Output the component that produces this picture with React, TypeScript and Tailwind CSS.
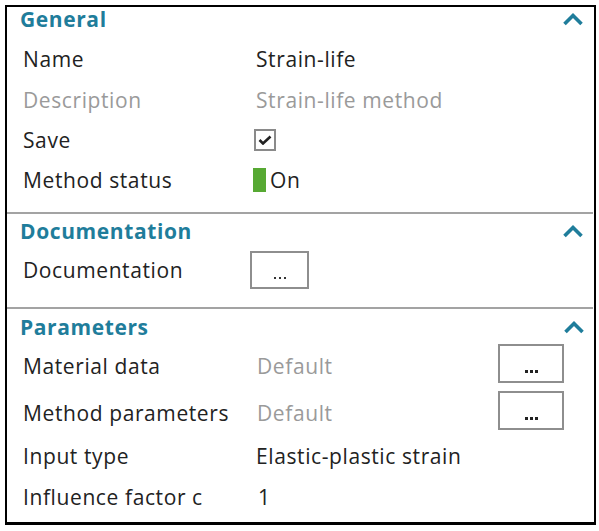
import React from 'react'

const font = { fontFamily: '"Open Sans", "Noto Sans", sans-serif' }

function Chevron() {
  return (
    <svg width="22" height="14" viewBox="0 0 22 14" className="text-[#1f7d9b]">
      <polyline points="2.5,12 11,3.5 19.5,12" fill="none" stroke="currentColor" strokeWidth="3.6" strokeLinecap="butt" strokeLinejoin="miter" />
    </svg>
  )
}

function Header({ title, pt }: { title: string; pt: string }) {
  return (
    <div className={`flex items-center justify-between h-[24px] pl-[13px] pr-[9px] ${pt}`}>
      <span className="text-[21px] leading-[24px] font-bold text-[#1f7d9b]">{title}</span>
      <Chevron />
    </div>
  )
}

function Row({ label, value, h, muted }: { label: string; value: React.ReactNode; h: string; muted?: boolean }) {
  return (
    <div className={`flex items-center pl-[16px] ${h}`}>
      <span className={`w-[233px] shrink-0 ${muted ? 'text-[#9a9a9a]' : 'text-[#222]'}`}>{label}</span>
      <div className={`flex-1 flex items-center ${muted ? 'text-[#9a9a9a]' : 'text-[#222]'}`}>{value}</div>
    </div>
  )
}

function DotsButton({ bold, className }: { bold?: boolean; className: string }) {
  return (
    <button
      type="button"
      className={`flex items-end justify-center border-2 border-[#8e8e8e] bg-white pb-[4px] text-[#222] ${className}`}
    >
      {bold ? (
        <span className="flex gap-[2px] mb-[4px]">
          <span className="w-[3px] h-[3px] bg-[#222]" />
          <span className="w-[3px] h-[3px] bg-[#222]" />
          <span className="w-[3px] h-[3px] bg-[#222]" />
        </span>
      ) : (
        <span className="flex gap-[3px] mb-[4px]">
          <span className="w-[2px] h-[2px] bg-[#333]" />
          <span className="w-[2px] h-[2px] bg-[#333]" />
          <span className="w-[2px] h-[2px] bg-[#333]" />
        </span>
      )}
    </button>
  )
}

export default function App() {
  return (
    <div className="w-[599px] h-[531px] bg-white pt-[5px] pl-[5px]" style={font}>
      <div className="w-[591px] h-[520px] border-2 border-b-[3px] border-black flex flex-col text-[21px] leading-[24px] tracking-[0.6px]">
        {/* General */}
        <div className="h-[207px] border-b-2 border-[#a3a3a3] mr-[1px]">
          <Header title="General" pt="" />
          <div className="mt-[7px]">
            <Row label="Name" value="Strain-life" h="h-[41px]" />
            <Row label="Description" value="Strain-life method" h="h-[41px]" muted />
            <Row
              label="Save"
              h="h-[40px]"
              value={
                <span className="ml-[-2px] w-[22px] h-[22px] border-2 border-[#8a8a8a] flex items-center justify-center">
                  <svg width="14" height="10" viewBox="0 0 14 10">
                    <polyline points="1.5,5 5,8.5 12.5,1.5" fill="none" stroke="#222" strokeWidth="2.6" />
                  </svg>
                </span>
              }
            />
            <Row
              label="Method status"
              h="h-[40px]"
              value={
                <span className="flex items-center ml-[-3px]">
                  <span className="w-[13px] h-[24px] bg-[#57a933] mr-[4px]" />
                  On
                </span>
              }
            />
          </div>
        </div>

        {/* Documentation */}
        <div className="h-[95px] border-b-2 border-[#a3a3a3] mr-[1px]">
          <Header title="Documentation" pt="mt-[5px]" />
          <div className="flex items-center pl-[16px] h-[40px] mt-[7px]">
            <span className="w-[227px] shrink-0 text-[#222]">Documentation</span>
            <DotsButton className="w-[59px] h-[38px]" />
          </div>
        </div>

        {/* Parameters */}
        <div className="flex-1">
          <Header title="Parameters" pt="mt-[6px]" />
          <div className="flex items-center pl-[16px] pr-[30px] h-[50px] mt-[2px]">
            <span className="w-[234px] shrink-0 text-[#222]">Material data</span>
            <span className="flex-1 text-[#9a9a9a]">Default</span>
            <DotsButton bold className="w-[66px] h-[39px] mb-[5px]" />
          </div>
          <div className="flex items-center pl-[16px] pr-[30px] h-[44px]">
            <span className="w-[234px] shrink-0 text-[#222]">Method parameters</span>
            <span className="flex-1 text-[#9a9a9a]">Default</span>
            <DotsButton bold className="w-[66px] h-[39px] mb-[5px]" />
          </div>
          <Row label="Input type" value="Elastic-plastic strain" h="h-[41px]" />
          <Row label="Influence factor c" value={<span className="ml-[2px]">1</span>} h="h-[42px]" />
        </div>
      </div>
    </div>
  )
}
